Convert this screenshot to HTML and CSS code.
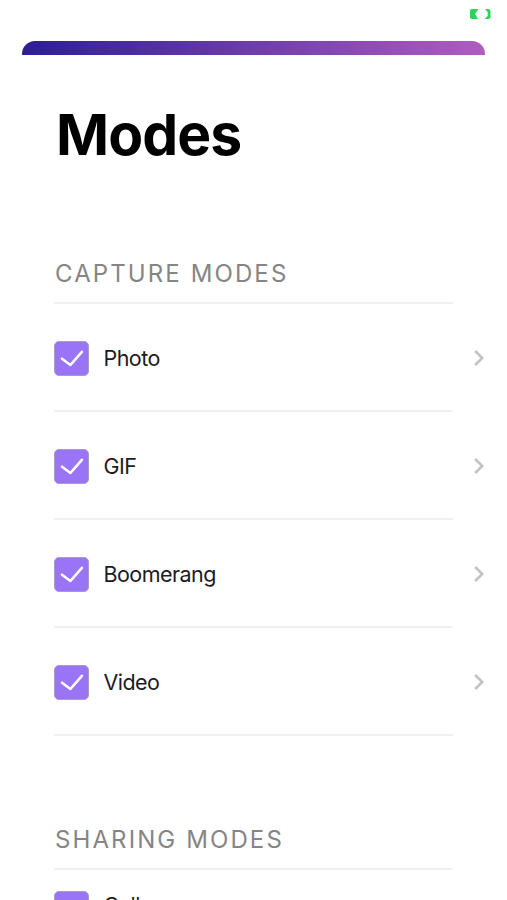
FILE: index.html
```html
<!DOCTYPE html>
<html lang="en">
<head>
<meta charset="utf-8">
<title>Modes</title>
<link rel="stylesheet" href="styles.css">
</head>
<body>
<svg class="symbols" aria-hidden="true">
  <symbol id="check" viewBox="0 0 35 35"><path d="M8 17.7 16.4 24 27.9 10.8"/></symbol>
  <symbol id="chevron" viewBox="0 0 12 18"><path d="m2.2 2 7 7-7 7"/></symbol>
</svg>
<header class="status">
  <svg class="battery" viewBox="0 0 22 12"><path d="M3 1H9.5L6 6 9 11H3Q1 11 1 9V3Q1 1 3 1Z"/><path d="M16 1H19Q21.5 1 21.5 3V9Q21.5 11 19 11H15.5L18.7 8V4Z"/></svg>
</header>
<div class="accent"></div>
<main class="content">
  <h1 class="title">Modes</h1>
  <section class="group">
    <h2 class="heading">CAPTURE MODES</h2>
    <div class="row"><span class="box"><svg><use href="#check"/></svg></span><span class="label">Photo</span><svg class="chevron"><use href="#chevron"/></svg></div>
    <div class="row"><span class="box"><svg><use href="#check"/></svg></span><span class="label">GIF</span><svg class="chevron"><use href="#chevron"/></svg></div>
    <div class="row"><span class="box"><svg><use href="#check"/></svg></span><span class="label">Boomerang</span><svg class="chevron"><use href="#chevron"/></svg></div>
    <div class="row"><span class="box"><svg><use href="#check"/></svg></span><span class="label">Video</span><svg class="chevron"><use href="#chevron"/></svg></div>
  </section>
  <section class="group sharing">
    <h2 class="heading">SHARING MODES</h2>
    <div class="row"><span class="box"><svg><use href="#check"/></svg></span><span class="label">Gallery</span></div>
  </section>
</main>
</body>
</html>
```

FILE: styles.css
```css
* { box-sizing: border-box; }
body {
  margin: 0;
  height: 900px;
  overflow: hidden;
  background: #fff;
  color: #1c1c1e;
  font-family: Inter, "Liberation Sans", sans-serif;
  display: flex;
  flex-direction: column;
}
.symbols { display: none; }
.status {
  flex: none;
  height: 41px;
  padding: 8px 16px 0 0;
  display: flex;
  justify-content: flex-end;
}
.battery { width: 22px; height: 12px; fill: #2fd158; }
.accent {
  flex: none;
  height: 14px;
  margin: 0 22px;
  border-radius: 13px 13px 0 0;
  background: linear-gradient(90deg, #2c1e96, #b05cc0);
}
.content { flex: none; padding: 0 22px 0 54px; }
.title {
  margin: 0;
  height: 193px;
  padding: 45px 0 0 2px;
  font-size: 57px;
  line-height: 70px;
  font-weight: 700;
  letter-spacing: -0.9px;
  color: #000;
}
.heading {
  margin: 0;
  width: 399px;
  height: 56px;
  padding: 11px 0 0 1px;
  border-bottom: 2px solid #f0f0f1;
  font-size: 24px;
  line-height: 30px;
  font-weight: 400;
  letter-spacing: 2.1px;
  color: #858585;
  white-space: nowrap;
}
.row {
  height: 108px;
  display: flex;
  align-items: center;
  background: linear-gradient(#f0f0f1, #f0f0f1) left bottom / 399px 2px no-repeat;
}
.box {
  width: 35px;
  height: 35px;
  border: 1px solid #a99bc3;
  border-radius: 5px;
  background: #9974f7;
}
.box svg {
  display: block;
  width: 35px;
  height: 35px;
  margin: -1px;
  fill: none;
  stroke: #fff;
  stroke-width: 2.6;
  stroke-linecap: round;
  stroke-linejoin: round;
}
.label {
  margin-left: 14.5px;
  font-size: 21.5px;
  line-height: 28px;
  letter-spacing: -0.55px;
}
.chevron {
  width: 12px;
  height: 18px;
  margin-left: auto;
  fill: none;
  stroke: #c2c2c4;
  stroke-width: 2.6;
}
.sharing { padding-top: 78px; }
.sharing .row { height: 77px; }
.sharing .label { margin-bottom: 7px; }
```
